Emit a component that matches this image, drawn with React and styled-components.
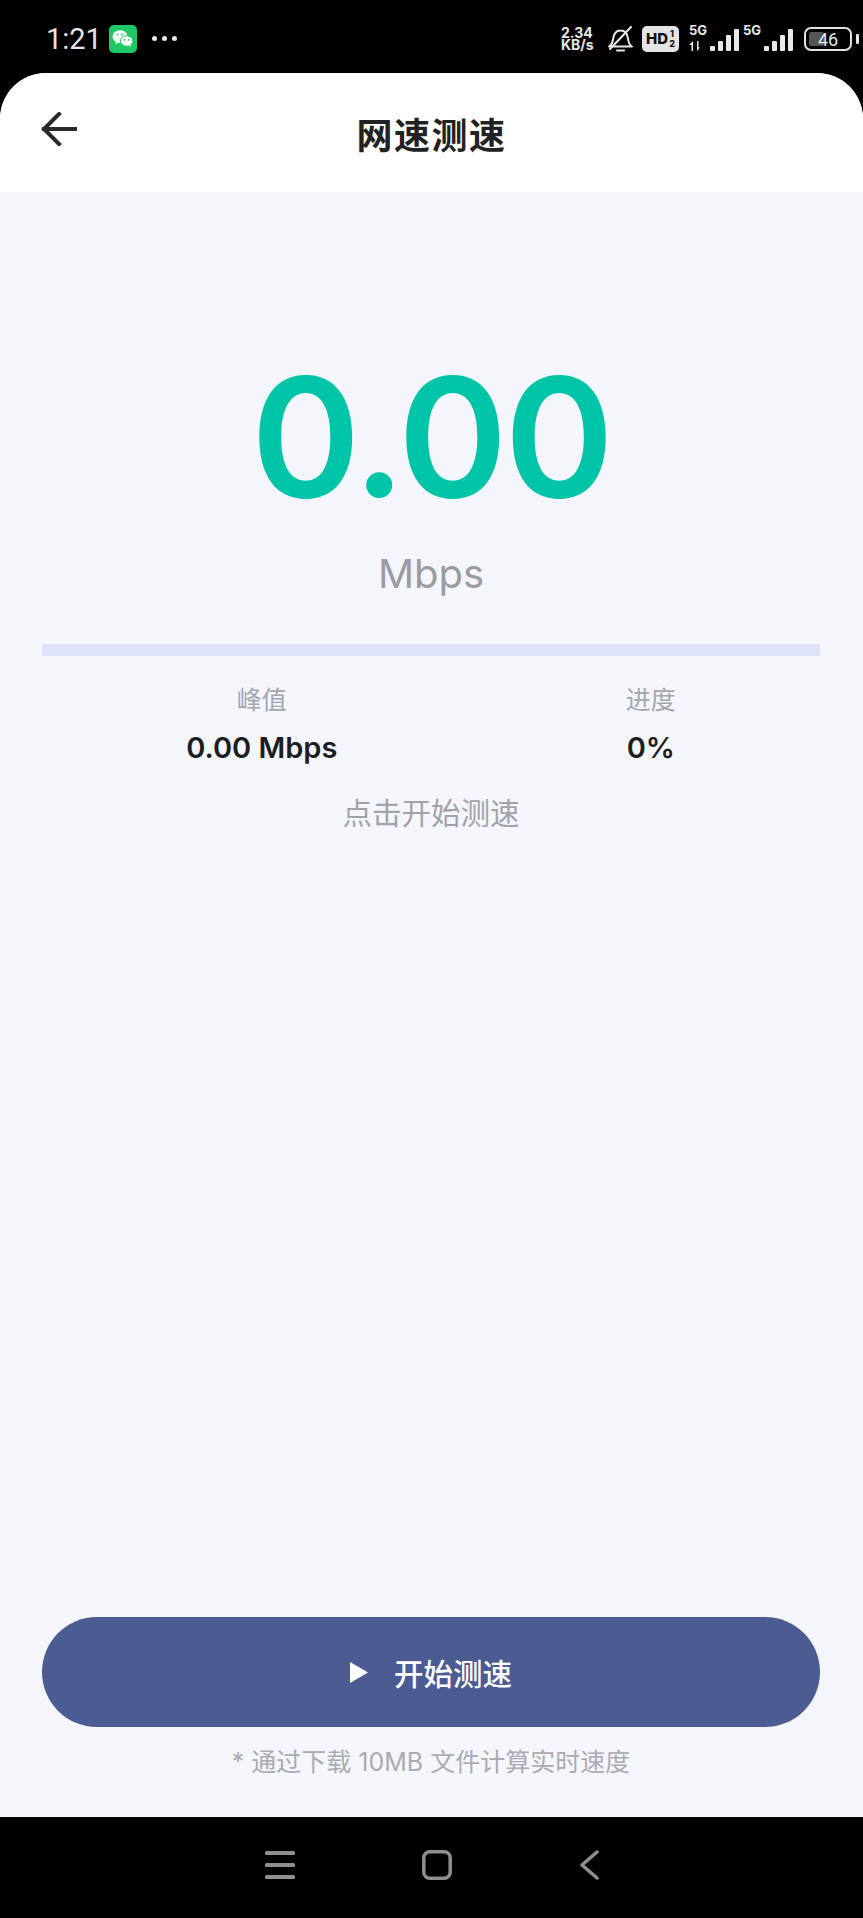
import React from "react";
import styled, { createGlobalStyle } from "styled-components";

const GlobalStyle = createGlobalStyle`
  html, body {
    margin: 0;
    padding: 0;
    background: #000;
  }
  * {
    box-sizing: border-box;
  }
`;

const FONT = `Inter, "Noto Sans CJK SC", sans-serif`;

const Screen = styled.div`
  width: 863px;
  height: 1918px;
  display: flex;
  flex-direction: column;
  background: #000;
  font-family: ${FONT};
  overflow: hidden;
`;

const StatusBar = styled.div`
  height: 73px;
  flex: none;
  display: flex;
  align-items: center;
  justify-content: space-between;
  padding: 11px 4px 7px 46px;
  color: #e8e8e8;
`;

const StatusLeft = styled.div`
  display: flex;
  align-items: center;
`;

const StatusRight = styled.div`
  display: flex;
  align-items: center;
`;

const Clock = styled.span`
  font-family: Roboto, sans-serif;
  font-size: 29px;
  width: 63px;
  color: #e4e4e4;
`;

const Dots = styled.div`
  display: flex;
  gap: 5px;
  margin-left: 15px;
`;

const Dot = styled.i`
  width: 5px;
  height: 5px;
  border-radius: 50%;
  background: #e8e8e8;
`;

const Speed = styled.div`
  display: flex;
  flex-direction: column;
  align-items: flex-start;
  width: 46px;
  font-size: 14px;
  font-weight: 700;
  line-height: 12px;
  color: #e8e8e8;
`;

const HdBadge = styled.div`
  width: 37px;
  height: 26px;
  margin-left: 8px;
  border-radius: 5px;
  background: #e4e4e4;
  color: #111;
  display: flex;
  align-items: center;
  justify-content: center;
  gap: 1px;
  font-size: 15px;
  font-weight: 800;
`;

const Fraction = styled.div`
  display: flex;
  flex-direction: column;
  font-size: 9px;
  line-height: 10px;
  font-weight: 800;
  text-align: center;
`;

const Signal = styled.div`
  position: relative;
  display: flex;
  align-items: flex-end;
  gap: 3px;
  height: 24px;
  width: ${(p) => p.$width}px;
  justify-content: flex-end;
  margin-left: ${(p) => p.$gap}px;
`;

const SignalLabel = styled.span`
  position: absolute;
  left: 0;
  top: -4px;
  font-size: 13px;
  font-weight: 700;
  line-height: 14px;
  color: #e8e8e8;
`;

const SignalBar = styled.i`
  width: 5px;
  height: ${(p) => p.$h}px;
  border-radius: 1px;
  background: #e8e8e8;
`;

const Battery = styled.div`
  width: 48px;
  height: 24px;
  margin-left: 11px;
  padding: 3px;
  border: 2px solid #e4e4e4;
  border-radius: 7px;
  position: relative;
  color: #e8e8e8;
  font-size: 18px;
  line-height: 16px;
  font-family: Roboto, sans-serif;
  text-align: center;
`;

const BatteryFill = styled.i`
  position: absolute;
  left: 3px;
  top: 3px;
  bottom: 3px;
  width: 15px;
  border-radius: 2px;
  background: #555;
`;

const BatteryText = styled.span`
  position: relative;
`;

const BatteryCap = styled.i`
  width: 3px;
  height: 10px;
  margin-left: 4px;
  border-radius: 1px;
  background: #e4e4e4;
`;

const Sheet = styled.div`
  flex: 1;
  display: flex;
  flex-direction: column;
  background: #f4f6fb;
  border-radius: 46px 46px 0 0;
  overflow: hidden;
`;

const Header = styled.header`
  height: 119px;
  flex: none;
  position: relative;
  display: flex;
  align-items: center;
  justify-content: center;
  background: #fff;
`;

const BackButton = styled.div`
  position: absolute;
  left: 41px;
  top: 39px;
  display: flex;
  color: #2a2a2a;
`;

const Title = styled.h1`
  margin: 0;
  font-size: 36px;
  font-weight: 700;
  letter-spacing: 1.5px;
  color: #222;
`;

const Content = styled.main`
  flex: 1;
  display: flex;
  flex-direction: column;
  padding: 0 43px 37px 42px;
`;

const Speedo = styled.div`
  margin-top: 145px;
  text-align: center;
  font-size: 166px;
  line-height: 200px;
  font-weight: 600;
  color: #00c4a7;
  letter-spacing: -3px;
`;

const Unit = styled.div`
  margin-top: 12px;
  text-align: center;
  font-size: 40px;
  line-height: 50px;
  color: #9a9ca3;
`;

const Track = styled.div`
  margin-top: 45px;
  height: 12px;
  background: #dfe3f9;
`;

const Stats = styled.div`
  margin-top: 26px;
  display: flex;
  justify-content: space-around;
`;

const Stat = styled.div`
  display: flex;
  flex-direction: column;
  align-items: center;
`;

const StatLabel = styled.div`
  font-size: 25px;
  line-height: 36px;
  color: #a3a5ab;
`;

const StatValue = styled.div`
  margin-top: 12px;
  font-size: 29px;
  line-height: 36px;
  font-weight: 600;
  color: #1d1e22;
`;

const Hint = styled.div`
  margin-top: 27px;
  text-align: center;
  font-size: 29.5px;
  line-height: 40px;
  color: #a1a3a9;
`;

const Spacer = styled.div`
  flex: 1;
`;

const StartButton = styled.button`
  height: 110px;
  border: 0;
  border-radius: 55px;
  background: #4c5b92;
  color: #fff;
  font-family: ${FONT};
  font-size: 29.5px;
  font-weight: 500;
  display: flex;
  align-items: center;
  justify-content: center;
  gap: 26px;
  padding: 0;
`;

const Note = styled.div`
  margin-top: 17px;
  text-align: center;
  font-size: 25px;
  line-height: 36px;
  color: #a9abb1;
`;

const NavBar = styled.nav`
  height: 101px;
  flex: none;
  background: #000;
  display: flex;
  align-items: flex-start;
  justify-content: center;
  padding-top: 33px;
  gap: 127px;
  color: #8f8f8f;
`;

const WeChatIcon = () => (
  <svg width="28" height="28" viewBox="0 0 28 28">
    <rect width="28" height="28" rx="5" fill="#1fc765" />
    <ellipse cx="11" cy="11.5" rx="7.5" ry="6.3" fill="#fff" />
    <path d="M7 16l-.6 3.4L10.4 17z" fill="#fff" />
    <ellipse cx="17.6" cy="16" rx="6.2" ry="5.2" fill="#fff" stroke="#1fc765" strokeWidth="1" />
    <path d="M20 20l1.6 2.4-.2-3.4z" fill="#fff" />
    <circle cx="8.5" cy="9.6" r="1" fill="#1fc765" />
    <circle cx="13.2" cy="9.6" r="1" fill="#1fc765" />
    <circle cx="15.6" cy="14.8" r=".9" fill="#1fc765" />
    <circle cx="19.8" cy="14.8" r=".9" fill="#1fc765" />
  </svg>
);

const MutedBell = () => (
  <svg width="27" height="26" viewBox="0 0 27 26" fill="none" stroke="#e8e8e8" strokeWidth="2" style={{ marginLeft: 0 }}>
    <path d="M2 20.5c2.5-1.5 3.5-3.5 4-7 .6-5 2.5-9 7.5-9s7 3.500 7.500 8c.4 4 1.500 6.500 4 8z" strokeLinejoin="round" />
    <path d="M10 24.500h7" strokeLinecap="round" />
    <path d="M3 23 24 1" strokeLinecap="round" />
  </svg>
);

const DataArrows = () => (
  <svg width="14" height="10" viewBox="0 0 14 10" fill="#e8e8e8" style={{ position: "absolute", left: 0, bottom: 0 }}>
    <path d="M4 0v10H2.500V4H0z" />
    <path d="M8 0v10l3-3.500H9.500V0z" />
  </svg>
);

const BackArrow = () => (
  <svg width="36" height="34" viewBox="0 0 36 34" fill="none" stroke="currentColor" strokeWidth="4" strokeLinecap="square">
    <path d="M3 17h31" />
    <path d="M18 2 3 17l15 15" />
  </svg>
);

const PlayIcon = () => (
  <svg width="18" height="21" viewBox="0 0 18 21" fill="#fff">
    <path d="M0 0l18 10.500L0 21z" />
  </svg>
);

const MenuIcon = () => (
  <svg width="30" height="30" viewBox="0 0 30 30" fill="currentColor">
    <rect y="1" width="30" height="4" rx="1.500" />
    <rect y="13" width="30" height="4" rx="1.500" />
    <rect y="25" width="30" height="4" rx="1.500" />
  </svg>
);

const HomeIcon = () => (
  <svg width="30" height="30" viewBox="0 0 30 30" fill="none" stroke="currentColor" strokeWidth="3.500">
    <rect x="1.800" y="1.800" width="26.400" height="26.400" rx="6" />
  </svg>
);

const NavBackIcon = () => (
  <svg width="20" height="30" viewBox="0 0 20 30" fill="none" stroke="currentColor" strokeWidth="3.500" strokeLinecap="round" strokeLinejoin="round">
    <path d="M18 2 3 15l15 13" />
  </svg>
);

const App = () => {
  return (
    <Screen>
      <GlobalStyle />
      <StatusBar>
        <StatusLeft>
          <Clock>1:21</Clock>
          <WeChatIcon />
          <Dots>
            <Dot />
            <Dot />
            <Dot />
          </Dots>
        </StatusLeft>
        <StatusRight>
          <Speed>
            <span>2.34</span>
            <span>KB/s</span>
          </Speed>
          <MutedBell />
          <HdBadge>
            HD
            <Fraction>
              <span>1</span>
              <span>2</span>
            </Fraction>
          </HdBadge>
          <Signal $width={50} $gap={10}>
            <SignalLabel>5G</SignalLabel>
            <DataArrows />
            <SignalBar $h={5} />
            <SignalBar $h={10} />
            <SignalBar $h={16} />
            <SignalBar $h={22} />
          </Signal>
          <Signal $width={50} $gap={4}>
            <SignalLabel>5G</SignalLabel>
            <SignalBar $h={5} />
            <SignalBar $h={10} />
            <SignalBar $h={16} />
            <SignalBar $h={22} />
          </Signal>
          <Battery>
            <BatteryFill />
            <BatteryText>46</BatteryText>
          </Battery>
          <BatteryCap />
        </StatusRight>
      </StatusBar>
      <Sheet>
        <Header>
          <BackButton>
            <BackArrow />
          </BackButton>
          <Title>网速测速</Title>
        </Header>
        <Content>
          <Speedo>0.00</Speedo>
          <Unit>Mbps</Unit>
          <Track />
          <Stats>
            <Stat>
              <StatLabel>峰值</StatLabel>
              <StatValue>0.00 Mbps</StatValue>
            </Stat>
            <Stat>
              <StatLabel>进度</StatLabel>
              <StatValue>0%</StatValue>
            </Stat>
          </Stats>
          <Hint>点击开始测速</Hint>
          <Spacer />
          <StartButton>
            <PlayIcon />
            <span>开始测速</span>
          </StartButton>
          <Note>* 通过下载 10MB 文件计算实时速度</Note>
        </Content>
      </Sheet>
      <NavBar>
        <MenuIcon />
        <HomeIcon />
        <NavBackIcon />
      </NavBar>
    </Screen>
  );
};

export default App;
